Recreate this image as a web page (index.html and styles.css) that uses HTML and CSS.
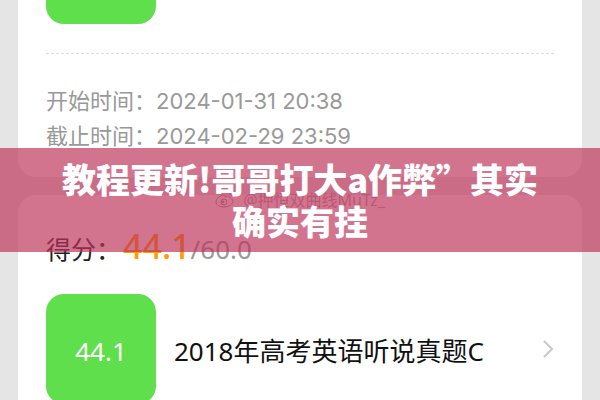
FILE: index.html
```html
<!DOCTYPE html>
<html lang="zh-CN">
<head>
	<meta charset="UTF-8">
	<meta name="viewport" content="width=device-width, initial-scale=1.0">
	<title>得分详情</title>
	<link rel="stylesheet" href="styles.css">
</head>
<body>

	<main class="page">
		<section class="card card-info">
			<div class="score-box score-box-top"></div>
			<div class="times">
				<p>开始时间：<span class="date">2024-01-31 20:38</span></p>
				<p>截止时间：<span class="date">2024-02-29 23:59</span></p>
			</div>
		</section>

		<section class="card card-score">
			<p class="total">得分：<span class="points">44.1</span><span class="max">/60.0</span></p>
			<a href="#" class="item">
				<span class="score-box">44.1</span>
				<span class="item-title">2018年高考英语听说真题C</span>
				<svg class="arrow" width="12" height="18" viewBox="0 0 12 18">
					<path d="M2 1L10 9L2 17" fill="none" stroke="#c8c8c8" stroke-width="2"/>
				</svg>
			</a>
		</section>
	</main>

	<div class="watermark">
		<svg width="22" height="18" viewBox="0 0 22 18" fill="none" stroke="#999" stroke-width="1">
			<path d="M9 5C5 5 1 9 1 12c0 3 4 5 8 5 5 0 9-3 9-6 0-2-2-2-3-3 0-2-1-3-5-1 0-1 0-2-1-2z"/>
			<circle cx="9" cy="12" r="3"/>
			<circle cx="8" cy="12" r="1" fill="#999"/>
			<path d="M14 1c4-1 7 2 6 6M14 4c2 0 3 1 3 3"/>
		</svg>
		<span>@押恒双曲线MuTz_</span>
	</div>

	<div class="banner">
		<h1>教程更新!哥哥打大a作弊”其实确实有挂</h1>
	</div>

</body>
</html>
```

FILE: styles.css
```css
* {
	box-sizing: border-box;
}
body {
	margin: 0;
	background-color: #e5e5e5;
	font-family: "Noto Sans", "Noto Sans CJK SC", sans-serif;
	color: #222;
}
p, h1 {
	margin: 0;
}
.page {
	height: 100vh;
	padding: 0 18px;
	overflow: hidden;
}
.card {
	background-color: #fff;
	border-radius: 18px;
	padding: 0 28px;
}
.card-info {
	border-top-left-radius: 0;
	border-top-right-radius: 0;
	padding-bottom: 25px;
	margin-bottom: 18px;
}
.score-box {
	display: flex;
	align-items: center;
	justify-content: center;
	flex: none;
	width: 110px;
	height: 110px;
	padding-top: 4px;
	border-radius: 18px;
	background-color: #5fdf4b;
	color: #fff;
	font-size: 26px;
	line-height: 32px;
}
.score-box-top {
	height: 24px;
	border-top-left-radius: 0;
	border-top-right-radius: 0;
}
.times {
	margin-top: 29px;
	padding-top: 28px;
	border-top: 1px dashed #ddd;
	color: #999;
	font-family: "Noto Sans CJK SC", sans-serif;
	font-size: 22px;
}
.times p {
	height: 35px;
	line-height: 35px;
}
.date {
	font-family: Inter, sans-serif;
}
.total {
	height: 73px;
	padding-top: 34px;
	font-size: 25px;
	line-height: 34px;
}
.points {
	margin-left: 2px;
	font-size: 34px;
	font-weight: 500;
	color: #ff9c00;
}
.max {
	color: #999;
	font-size: 26px;
}
.item {
	display: flex;
	align-items: center;
	margin-top: 26px;
	padding-bottom: 24px;
	color: #111;
	text-decoration: none;
}
.item-title {
	flex: 1;
	margin-left: 18px;
	padding-top: 4px;
	font-size: 26px;
	line-height: 36px;
}

/* sits between the cards and the banner */
.watermark {
	position: absolute;
	top: 190px;
	left: 0;
	right: 0;
	display: flex;
	justify-content: center;
	gap: 6px;
	color: #aaa;
	font-size: 16px;
	line-height: 20px;
}
.banner {
	position: absolute;
	top: 50%;
	left: 0;
	right: 0;
	transform: translateY(-50%);
	padding: 10px 60px;
	background-color: rgba(190, 50, 90, 0.68);
}
.banner h1 {
	color: #fff;
	font-family: "Noto Sans CJK SC", sans-serif;
	font-size: 34px;
	line-height: 42px;
	font-weight: 900;
	text-align: center;
}
```
